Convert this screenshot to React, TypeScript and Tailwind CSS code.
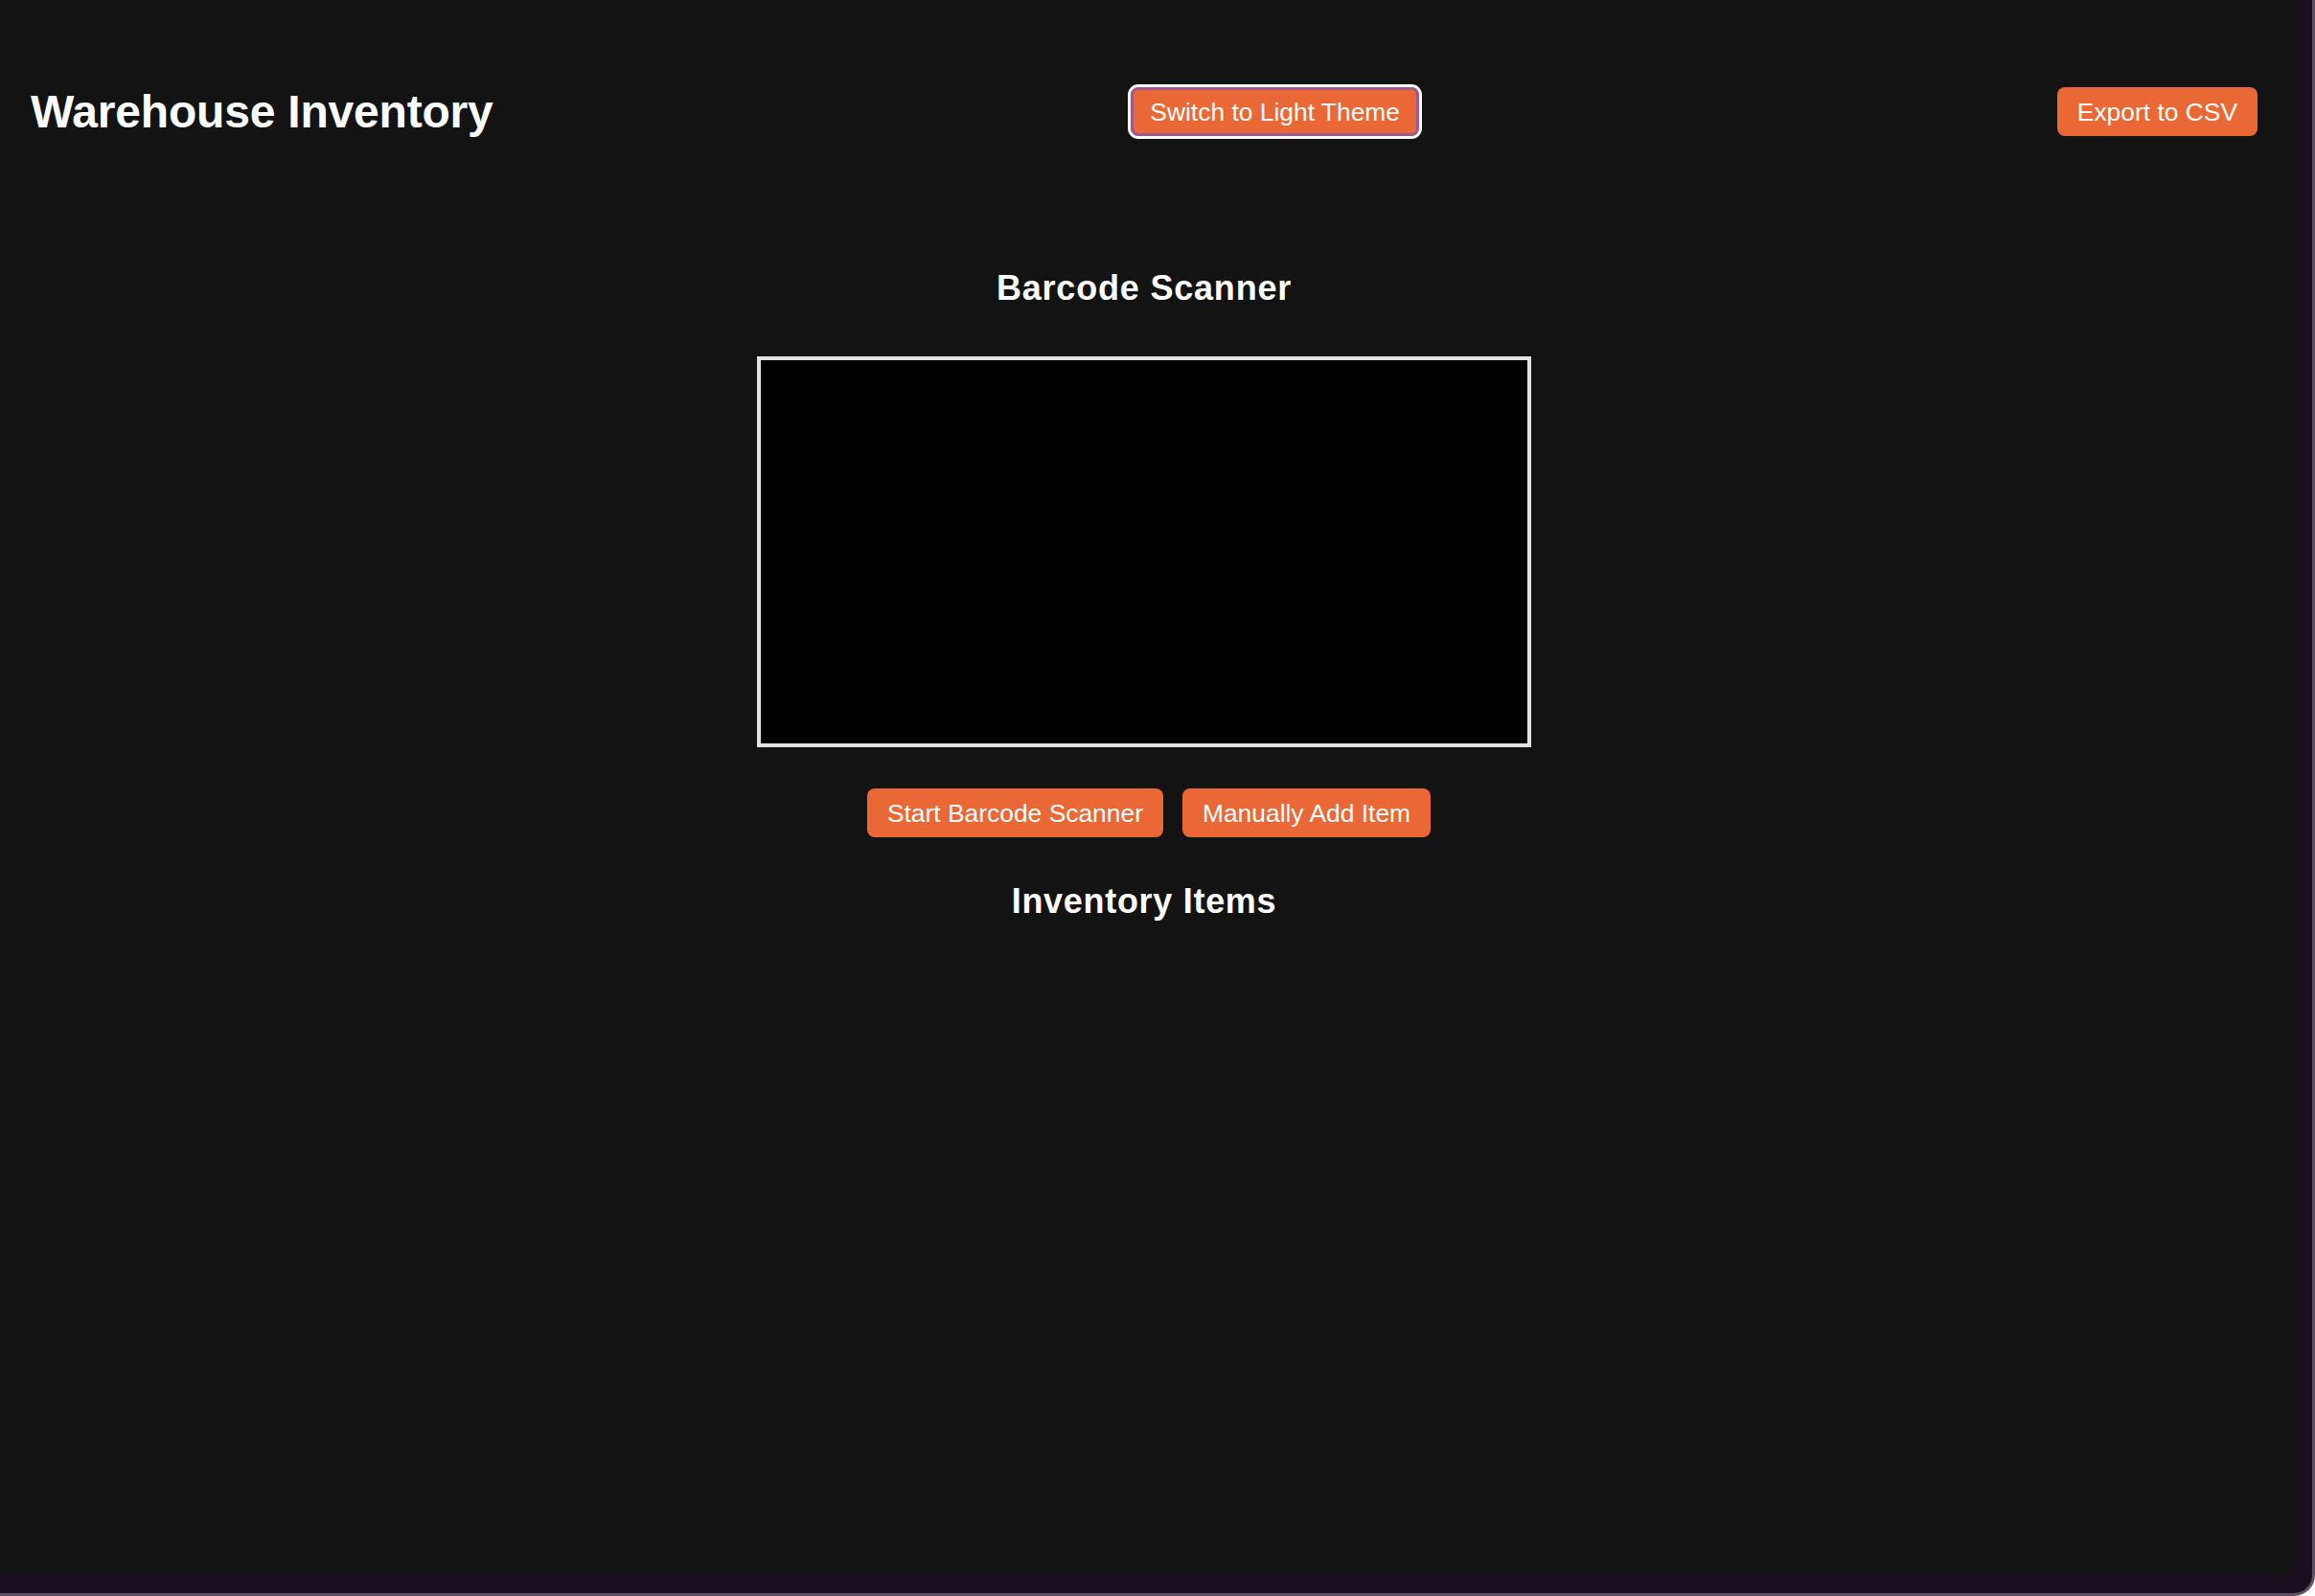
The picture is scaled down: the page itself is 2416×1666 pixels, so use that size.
import React from "react";

const font = { fontFamily: '"Liberation Sans", Arial, Helvetica, sans-serif' };

function OrangeButton({ label, focused = false }: { label: string; focused?: boolean }) {
  return (
    <button
      className={
        "h-[51px] rounded-[8px] bg-[#e96836] text-white text-[26.4px] leading-[30px] whitespace-nowrap " +
        (focused ? "border-[3px] border-[#a05a8e] outline-[3px] outline-solid outline-white px-[17.5px]" : "px-[21px]")
      }
    >
      {label}
    </button>
  );
}

export default function App() {
  return (
    <div style={font} className="w-[2416px] h-[1666px] bg-[#1b0e1f] border-r-[3px] border-b-[3px] border-[#5e5163] rounded-br-[22px] overflow-hidden">
      <div className="w-[2396px] h-[1645px] bg-[#131313] rounded-br-[12px] overflow-hidden">
        <div className="w-[2388px] pt-[91px] px-[32px] flex flex-col items-center">
          {/* header */}
          <div className="w-full h-[51px] flex items-center justify-between">
            <h1 className="text-white text-[48px] leading-[56px] font-bold tracking-[-0.2px]">Warehouse Inventory</h1>
            <OrangeButton label="Switch to Light Theme" focused />
            <OrangeButton label="Export to CSV" />
          </div>

          <h2 className="mt-[139px] text-white text-[36px] leading-[40px] font-bold tracking-[0.8px]">Barcode Scanner</h2>

          <div className="mt-[51px] w-[808px] h-[408px] border-4 border-[#e2e2e2] bg-black" />

          <div className="mt-[43px] ml-[10px] flex gap-[20px]">
            <OrangeButton label="Start Barcode Scanner" />
            <OrangeButton label="Manually Add Item" />
          </div>

          <h2 className="mt-[47px] text-white text-[36px] leading-[40px] font-bold tracking-[0.7px]">Inventory Items</h2>
        </div>
      </div>
    </div>
  );
}
